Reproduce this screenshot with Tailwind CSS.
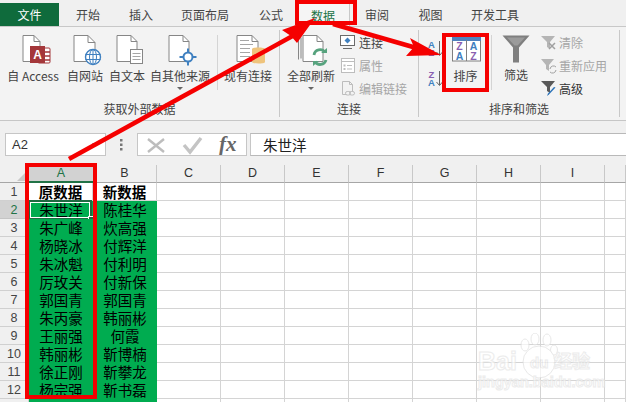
<!DOCTYPE html>
<html lang="zh-CN">
<head>
  <meta charset="UTF-8">
  <title>排序</title>
  <script src="https://cdn.jsdelivr.net/npm/@tailwindcss/browser@4"></script>
</head>
<body class="relative w-[626px] h-[402px] overflow-hidden bg-[#f0f0f0] text-[12px] text-[#444] font-['Noto_Sans_CJK_SC',sans-serif]">

  <!-- tabs -->
  <div class="flex h-[27px] pt-[3px] border-b border-[#c8c8c8] text-[12px] leading-[23px]">
    <div class="w-[59px] text-center bg-[#0f6b3c] text-white">文件</div>
    <div class="w-[58px] text-center">开始</div>
    <div class="w-[48px] text-center">插入</div>
    <div class="w-[80px] text-center">页面布局</div>
    <div class="w-[52px] text-center">公式</div>
    <div class="w-[54px] h-[24px] text-center bg-[#f5f5f5] border border-b-0 border-[#c8c8c8] text-[#217346] ml-[-1px]">数据</div>
    <div class="w-[54px] text-center">审阅</div>
    <div class="w-[53px] text-center">视图</div>
    <div class="w-[76px] text-center">开发工具</div>
  </div>

  <!-- ribbon -->
  <div class="flex h-[94px] bg-[#f3f3f3] border-b border-[#c6c6c6]">
    <div class="w-[280px] flex flex-col border-r border-[#c8c8c8] my-[3px]">
      <div class="flex h-[76px] mt-[-3px]">
        <div class="w-[2px]"></div>
        <div class="w-[62px] flex flex-col items-center pt-[7px]">
          <svg class="w-[30px] h-[30px] overflow-visible" viewBox="0 0 30 30">
            <path d="M5 1.500h11l6 6v20h-17z" fill="#fff" stroke="#868686"/><path d="M16 1.500v6h6" fill="none" stroke="#868686"/>
            <rect x="20" y="14" width="12" height="15" rx="1" fill="#fff" stroke="#a4373a"/>
            <path d="M20 18h12M20 22h12M20 26h12" stroke="#a4373a" stroke-width="1.500"/>
            <rect x="12" y="12" width="15" height="17" fill="#a4373a"/>
            <text x="19.500" y="25" text-anchor="middle" font-size="12" font-weight="700" font-family="Liberation Sans" fill="#fff">A</text>
          </svg>
          <span class="leading-[24px] whitespace-nowrap">自 Access</span>
        </div>
        <div class="w-[42px] flex flex-col items-center pt-[7px]">
          <svg class="w-[30px] h-[30px] overflow-visible" viewBox="0 0 30 30">
            <path d="M4 1.500h14l7 7v19h-21z" fill="#fff" stroke="#868686"/><path d="M18 1.500v7h7" fill="none" stroke="#868686"/>
            <circle cx="23" cy="23" r="7.500" fill="#fff" stroke="#3f80c0" stroke-width="1.400"/>
            <ellipse cx="23" cy="23" rx="3.500" ry="7.500" fill="none" stroke="#3f80c0"/>
            <path d="M15.500 20.500h15M15.500 25.500h15M23 15.500v15" stroke="#3f80c0"/>
          </svg>
          <span class="leading-[24px] whitespace-nowrap">自网站</span>
        </div>
        <div class="w-[42px] flex flex-col items-center pt-[7px]">
          <svg class="w-[30px] h-[30px] overflow-visible" viewBox="0 0 30 30">
            <path d="M5 1.500h14l6 6v20h-20z" fill="#fff" stroke="#868686"/><path d="M19 1.500v6h6" fill="none" stroke="#868686"/>
            <rect x="18.500" y="15.500" width="12" height="14" fill="#fff" stroke="#868686"/>
            <path d="M20.500 19.500h8M20.500 22.500h8M20.500 25.500h8" stroke="#a6a6a6"/>
          </svg>
          <span class="leading-[24px] whitespace-nowrap">自文本</span>
        </div>
        <div class="w-[64px] flex flex-col items-center pt-[7px]">
          <svg class="w-[30px] h-[30px] overflow-visible" viewBox="0 0 30 30">
            <path d="M4 1.500h14l6 6v20h-20z" fill="#fff" stroke="#868686"/><path d="M18 1.500v6h6" fill="none" stroke="#868686"/>
            <circle cx="23" cy="23" r="4.500" fill="#fff" stroke="#3f80c0" stroke-width="2"/>
            <path d="M23 14.500v4M23 27.500v4M14.500 23h4M27.500 23h4" stroke="#3f80c0" stroke-width="2"/>
          </svg>
          <span class="leading-[24px] whitespace-nowrap">自其他来源</span>
          <span class="w-0 h-0 border-x-[3px] border-x-transparent border-t-[3px] border-t-[#666] mt-[-1px]"></span>
        </div>
        <div class="w-[5px]"></div>
        <div class="w-px h-[55px] bg-[#d4d4d4] mt-[8px]"></div>
        <div class="w-[4px]"></div>
        <div class="w-[52px] flex flex-col items-center pt-[7px]">
          <svg class="w-[30px] h-[30px] overflow-visible" viewBox="0 0 30 30">
            <path d="M4 1.500h15l6 6v20h-21z" fill="#fff" stroke="#868686"/><path d="M19 1.500v6h6" fill="none" stroke="#868686"/>
            <path d="M7 6.500h9M7 10.500h13M7 14.500h10M7 18.500h10M7 22.500h10" stroke="#a6a6a6"/>
            <path d="M19 15c0-2 13-2 13 0v13c0 2-13 2-13 0z" fill="#efc47d"/>
          </svg>
          <span class="leading-[24px] whitespace-nowrap">现有连接</span>
        </div>
      </div>
      <div class="text-center leading-[16px]">获取外部数据</div>
    </div>

    <div class="w-[139px] flex flex-col border-r border-[#c8c8c8] my-[3px]">
      <div class="flex h-[76px] mt-[-3px]">
        <div class="w-[6px]"></div>
        <div class="w-[50px] flex flex-col items-center pt-[7px]">
          <svg class="w-[30px] h-[30px] overflow-visible" viewBox="0 0 30 30">
            <path d="M2.500 5.500v20M5 3.500v21M7 1.500h14l6 6v20h-20z" fill="#fff" stroke="#868686"/><path d="M21 1.500v6h6" fill="none" stroke="#868686"/>
            <path d="M18 21a6 6 0 0 1 11-2.500M30 26a6 6 0 0 1-11 1.500" fill="none" stroke="#57a37e" stroke-width="2.800"/>
            <path d="M25 19h6v-5zM23 27h-6v5z" fill="#57a37e"/>
          </svg>
          <span class="leading-[24px] whitespace-nowrap">全部刷新</span>
          <span class="w-0 h-0 border-x-[3px] border-x-transparent border-t-[3px] border-t-[#666] mt-[-1px]"></span>
        </div>
        <div class="flex flex-col pl-[3px] pt-[4px]">
          <div class="flex items-center h-[23px] gap-[3px]">
            <svg class="w-[17px] h-[17px]" viewBox="0 0 17 17"><rect x="1.500" y="1.500" width="14" height="10" fill="#fff" stroke="#6b6b6b"/><path d="M8.500 3.500l3 3-3 3-3-3z" fill="#3f80c0"/><path d="M4 14.500h9" stroke="#6b6b6b"/></svg>
            <span>连接</span>
          </div>
          <div class="flex items-center h-[23px] gap-[3px] text-[#a6a6a6]">
            <svg class="w-[17px] h-[17px]" viewBox="0 0 17 17"><rect x="2.500" y="1.500" width="13" height="14" fill="#fff" stroke="#bdbdbd"/><path d="M2.500 4.500h13M8 8.500h5M8 12h5" stroke="#bdbdbd"/><path d="M4.500 7.500h2v2h-2zM4.500 11h2v2h-2z" fill="#bdbdbd"/></svg>
            <span>属性</span>
          </div>
          <div class="flex items-center h-[23px] gap-[3px] text-[#a6a6a6]">
            <svg class="w-[17px] h-[17px]" viewBox="0 0 17 17"><path d="M3.500 1.500h7l3 3v7M3.500 1.500v13h4" fill="none" stroke="#bdbdbd"/><path d="M10.500 1.500v3h3" fill="none" stroke="#bdbdbd"/><rect x="6.500" y="11.500" width="5" height="3.500" rx="1.700" fill="none" stroke="#bdbdbd"/><rect x="10.500" y="11.500" width="5" height="3.500" rx="1.700" fill="none" stroke="#bdbdbd"/></svg>
            <span>编辑链接</span>
          </div>
        </div>
      </div>
      <div class="text-center leading-[16px]">连接</div>
    </div>

    <div class="w-[201px] flex flex-col border-r border-[#c8c8c8] my-[3px]">
      <div class="flex h-[76px] mt-[-3px]">
        <div class="w-[9px]"></div>
        <div class="w-[15px] flex flex-col gap-[13px] pt-[13px]">
          <svg class="w-[15px] h-[17px] overflow-visible" viewBox="0 0 15 17">
            <text x="0" y="8" font-size="9.500" font-weight="700" font-family="Liberation Sans" fill="#3f80c0">A</text>
            <text x="0.500" y="16" font-size="9.500" font-weight="700" font-family="Liberation Sans" fill="#8a5fb0">Z</text>
            <path d="M11.500 1v14M8.500 12l3 3.500 3-3.500" fill="none" stroke="#666"/>
          </svg>
          <svg class="w-[15px] h-[17px] overflow-visible" viewBox="0 0 15 17">
            <text x="0.500" y="8" font-size="9.500" font-weight="700" font-family="Liberation Sans" fill="#8a5fb0">Z</text>
            <text x="0" y="16" font-size="9.500" font-weight="700" font-family="Liberation Sans" fill="#3f80c0">A</text>
            <path d="M11.500 1v14M8.500 12l3 3.500 3-3.500" fill="none" stroke="#666"/>
          </svg>
        </div>
        <div class="w-[41px] flex flex-col items-center pt-[9px] ml-[2px]">
          <svg class="w-[30px] h-[26px]" viewBox="0 0 30 26">
            <rect x="1.500" y="2" width="28" height="23" fill="#fff" stroke="#7f7f7f"/>
            <rect x="1" y="1" width="29" height="4" fill="#4f81bd"/>
            <path d="M15.500 4v21" stroke="#7f7f7f"/>
            <text x="8.500" y="14" text-anchor="middle" font-size="10.500" font-weight="700" font-family="Liberation Sans" fill="#8a5fb0">Z</text>
            <text x="8.500" y="24" text-anchor="middle" font-size="10.500" font-weight="700" font-family="Liberation Sans" fill="#3f80c0">A</text>
            <text x="22.500" y="14" text-anchor="middle" font-size="10.500" font-weight="700" font-family="Liberation Sans" fill="#3f80c0">A</text>
            <text x="22.500" y="24" text-anchor="middle" font-size="10.500" font-weight="700" font-family="Liberation Sans" fill="#8a5fb0">Z</text>
          </svg>
          <span class="leading-[24px] mt-[2px] whitespace-nowrap">排序</span>
        </div>
        <div class="w-[5px]"></div>
        <div class="w-px h-[55px] bg-[#d4d4d4] mt-[8px]"></div>
        <div class="w-[48px] flex flex-col items-center pt-[8px]">
          <svg class="w-[28px] h-[28px]" viewBox="0 0 28 28">
            <path d="M0.500 0.500h27l-10.500 12v15h-6v-15z" fill="#7f7f7f"/>
            <path d="M5 2.500h18l-7.500 8h-3z" fill="#9b9b9b"/>
          </svg>
          <span class="leading-[24px] whitespace-nowrap">筛选</span>
        </div>
        <div class="flex flex-col pt-[4px]">
          <div class="flex items-center h-[23px] gap-[2px] text-[#a6a6a6]">
            <svg class="w-[17px] h-[17px]" viewBox="0 0 17 17"><path d="M1 2h14l-5 6v7l-3-2v-5z" fill="#b5b5b5"/><path d="M9 9l6 6M15 9l-6 6" stroke="#a0a0a0" stroke-width="1.500"/></svg>
            <span>清除</span>
          </div>
          <div class="flex items-center h-[23px] gap-[2px] text-[#a6a6a6]">
            <svg class="w-[17px] h-[17px]" viewBox="0 0 17 17"><path d="M1 2h13l-5 6v6l-3-2v-4z" fill="#b5b5b5"/><path d="M10 12a3.500 3.500 0 0 1 6-2M16 13a3.500 3.500 0 0 1-6 2" fill="none" stroke="#a0a0a0"/></svg>
            <span>重新应用</span>
          </div>
          <div class="flex items-center h-[23px] gap-[2px] text-[#333]">
            <svg class="w-[17px] h-[17px]" viewBox="0 0 17 17"><path d="M1 1h14l-5 6v6l-3-2v-4z" fill="#595959"/><path d="M15.500 7.500l-6.500 7-2 1.500 1-2.500 6-6.500z" fill="#2b72b8"/></svg>
            <span>高级</span>
          </div>
        </div>
      </div>
      <div class="text-center leading-[16px]">排序和筛选</div>
    </div>
  </div>

  <!-- formula bar -->
  <div class="flex h-[23px] mt-[12px] text-[13px]">
    <div class="w-[101px] ml-[5px] bg-white border border-[#c6c6c6] flex items-center justify-between pl-[6px] pr-[7px] font-['Liberation_Sans'] text-[#333]">
      A2
      <span class="w-0 h-0 border-x-[3px] border-x-transparent border-t-[3px] border-t-[#666]"></span>
    </div>
    <div class="w-[31px] flex items-center justify-center">
      <svg class="w-[3px] h-[13px]" viewBox="0 0 3 13"><path d="M0 1h2.500v2.500h-2.500zM0 5.500h2.500v2.500h-2.500zM0 10h2.500v2.500h-2.500z" fill="#777"/></svg>
    </div>
    <div class="w-[110px] bg-white border border-[#c6c6c6] flex items-center">
      <svg class="w-[108px] h-[21px]" viewBox="0 0 108 21">
        <path d="M10 5l16 13M26 5l-16 13" stroke="#bdbdbd" stroke-width="2.400" fill="none"/>
        <path d="M46 11l6 7 11-14" stroke="#c4c4c4" stroke-width="3.400" fill="none"/>
        <text x="81" y="17" font-size="21" font-weight="700" font-style="italic" font-family="Liberation Serif" fill="#666">fx</text>
      </svg>
    </div>
    <div class="w-[3px]"></div>
    <div class="flex-1 bg-white border-y border-[#b9b9b9] border-l border-l-[#c6c6c6] pl-[12px] text-[14.500px] text-[#222] leading-[21px]">朱世洋</div>
  </div>

  <!-- sheet -->
  <div id="sheet" class="mt-[9px] grid grid-cols-[29px_repeat(9,64px)_1fr] auto-rows-[18px] bg-white text-black"></div>

  <!-- baidu watermark -->
  <div class="absolute left-[478px] top-[333px] w-[118px] h-[58px] font-['Liberation_Sans'] text-white [-webkit-text-stroke:1px_#e4e4e4] opacity-70">
    <svg class="absolute left-[36px] top-0 w-[46px] h-[46px]" viewBox="0 0 46 46">
      <g fill="#fff" stroke="#e0e0e0">
        <ellipse cx="11" cy="12" rx="4" ry="6"/><ellipse cx="21" cy="6" rx="4" ry="6"/><ellipse cx="33" cy="7" rx="4" ry="6"/><ellipse cx="40" cy="17" rx="3.500" ry="5"/>
        <circle cx="25" cy="29" r="16"/>
      </g>
    </svg>
    <span class="absolute left-0 top-[14px] text-[25px] font-bold leading-[28px]">Bai</span>
    <span class="absolute left-[52px] top-[21px] text-[15px] font-bold leading-[18px]">du</span>
    <span class="absolute left-[76px] top-[16px] text-[18px] font-bold leading-[22px] font-['Noto_Sans_CJK_SC']">经验</span>
    <span class="absolute left-0 top-[41px] text-[14.500px] font-bold leading-[16px] whitespace-nowrap">jingyan.baidu.com</span>
  </div>

  <!-- red annotations -->
  <svg class="absolute left-0 top-0 w-[626px] h-[402px] pointer-events-none" viewBox="0 0 626 402">
    <g fill="none" stroke="#f50000" stroke-width="4">
      <rect x="297" y="2" width="58" height="21"/>
      <rect x="444" y="35" width="43" height="55"/>
      <rect x="27" y="165" width="68" height="232"/>
    </g>
    <path d="M69 159L298 33" stroke="#f50000" stroke-width="4.500"/>
    <path d="M315 18L282 30L291 36L297 43z" fill="#f50000"/>
    <path d="M333 24L420 49" stroke="#f50000" stroke-width="4.500"/>
    <path d="M441 55L410 38L414 47L406 56z" fill="#f50000"/>
  </svg>

  <script>
    const colA = ['原数据','朱世洋','朱广峰','杨晓冰','朱冰魁','厉玫关','郭国青','朱丙豪','王丽强','韩丽彬','徐正刚','杨宗强','']
    const colB = ['新数据','陈桂华','炊高强','付辉洋','付利明','付新保','郭国青','韩丽彬','何霞','靳博楠','靳攀龙','靳书磊','']
    const letters = ['A','B','C','D','E','F','G','H','I','']
    const sheet = document.getElementById('sheet')

    function add(cls, text) {
      const d = document.createElement('div')
      d.className = cls
      d.textContent = text
      sheet.appendChild(d)
      return d
    }

    // header row
    const corner = add('bg-[#f0f0f0] border-b border-[#a6a6a6] flex items-end justify-end pr-[1px] pb-[1px]', '')
    corner.innerHTML = '<span class="w-0 h-0 border-l-[11px] border-l-transparent border-b-[11px] border-b-[#c8c8c8]"></span>'
    letters.forEach((l, i) => {
      add(i === 0
        ? 'bg-[#d2d2d2] border-b-2 border-[#217346] text-center text-[12.500px] leading-[16px] text-[#217346] font-["Liberation_Sans"]'
        : 'bg-[#f0f0f0] border-b border-r border-b-[#a6a6a6] border-r-[#c8c8c8] text-center text-[12.500px] leading-[16px] text-[#333] font-["Liberation_Sans"]', l)
    })

    for (let r = 0; r < 13; r++) {
      add(r === 1
        ? 'bg-[#d2d2d2] border-b border-r border-[#c4c4c4] text-center text-[12.500px] leading-[18px] text-[#217346] font-["Liberation_Sans"]'
        : 'bg-[#f0f0f0] border-b border-r border-[#d0d0d0] text-center text-[12.500px] leading-[18px] text-[#444] font-["Liberation_Sans"]', r < 12 ? r + 1 : '')
      const a = add(r === 0
        ? 'bg-white border-b border-r border-[#d4d4d4] text-center text-[14.500px] leading-[18px] font-bold'
        : 'relative bg-[#00ac50] text-center text-[14.500px] leading-[18px] whitespace-nowrap', colA[r])
      add(r === 0
        ? 'bg-white border-b border-r border-[#d4d4d4] text-center text-[14.500px] leading-[18px] font-bold'
        : 'bg-[#00ac50] text-center text-[14.500px] leading-[18px] whitespace-nowrap', colB[r])
      if (r === 1) {
        const sel = document.createElement('div')
        sel.className = 'absolute left-[-1px] top-[-1px] w-[64px] h-[20px] border-2 border-[#1e6b41] outline outline-1 outline-offset-[-3px] outline-white'
        a.appendChild(sel)
        const handle = document.createElement('div')
        handle.className = 'absolute left-[59px] top-[15px] w-[5px] h-[5px] bg-[#1e6b41] border border-white box-content'
        a.appendChild(handle)
      }
      for (let c = 2; c < 10; c++) add('bg-white border-b border-r border-[#d4d4d4]', '')
    }
  </script>
</body>
</html>
